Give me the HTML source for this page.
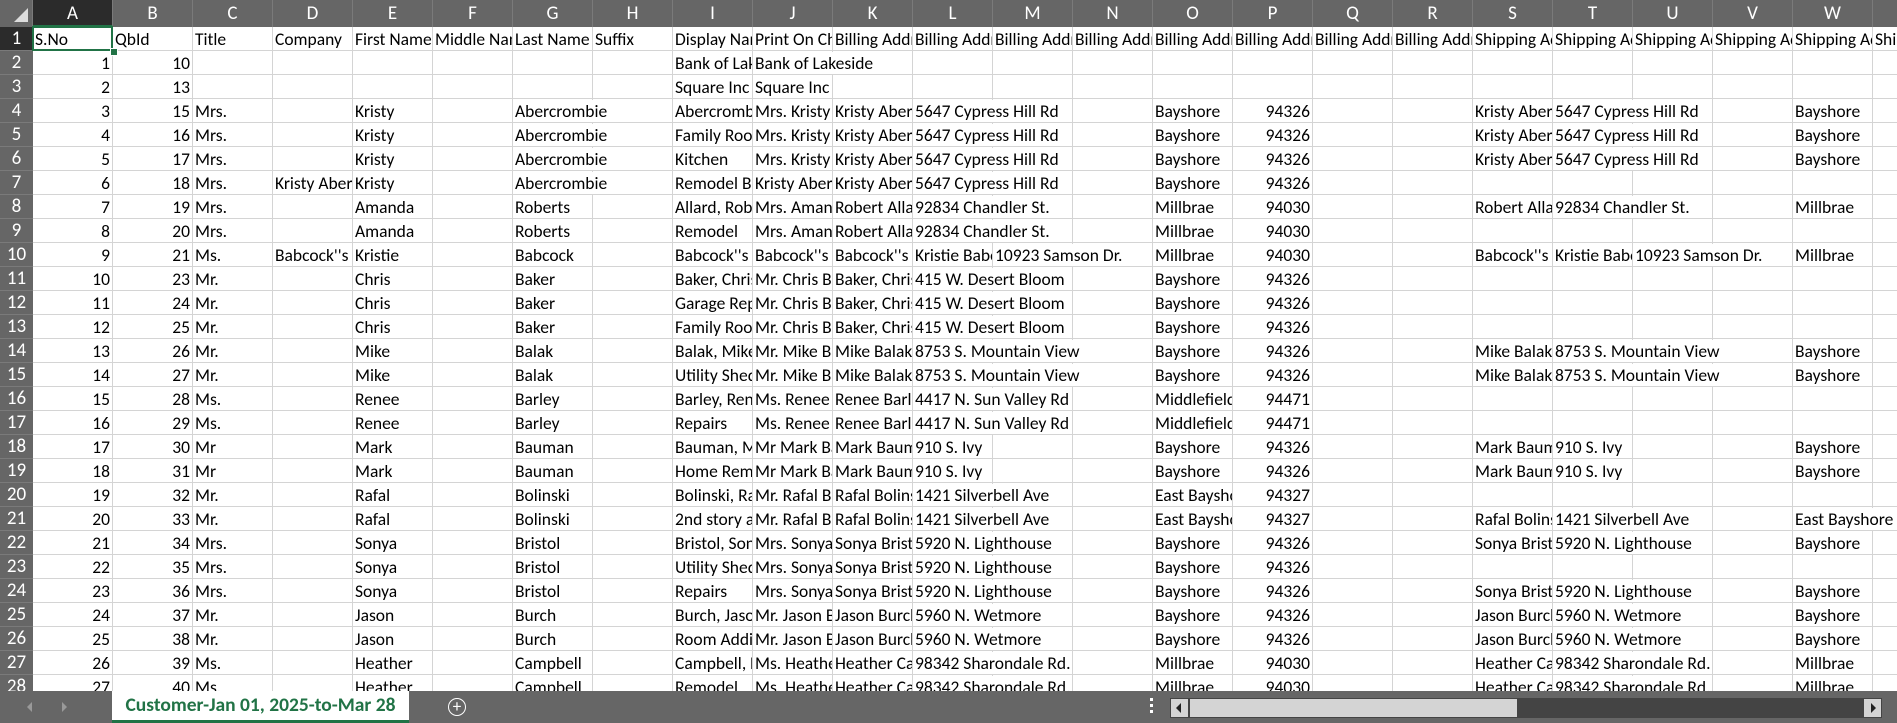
<!DOCTYPE html>
<html><head><meta charset="utf-8"><style>
body{margin:0;width:1897px;height:723px;overflow:hidden;background:#fff;font-family:Calibri,Carlito,"Liberation Sans",sans-serif;position:relative}
#g{position:absolute;left:0;top:0;width:1897px;height:691px;overflow:hidden}
.ch{position:absolute;top:0;height:27px;background:#666;color:#fff;font-size:19px;text-align:center;line-height:28px;border-right:1px solid #7a7a7a;box-sizing:border-box}
.rh{position:absolute;left:0;width:33px;height:24px;background:#666;color:#fff;font-size:19px;text-align:center;line-height:24px;border-bottom:1px solid #7a7a7a;box-sizing:border-box}
.vl{position:absolute;top:27px;width:1px;height:664px;background:#d4d4d4}
.hl{position:absolute;left:33px;height:1px;width:1864px;background:#d4d4d4}
.t{position:absolute;height:24px;line-height:25px;font-size:17.5px;white-space:nowrap;overflow:hidden;padding:0 2px;box-sizing:border-box;background:#fff;color:#000}
#tb{position:absolute;left:0;top:691px;width:1897px;height:32px;background:#666}
</style></head><body>
<div id="g"></div>
<div id="tb">
<div style="position:absolute;left:27px;top:11px;width:0;height:0;border-top:5px solid transparent;border-bottom:5px solid transparent;border-right:5px solid #999"></div>
<div style="position:absolute;left:62px;top:11px;width:0;height:0;border-top:5px solid transparent;border-bottom:5px solid transparent;border-left:5px solid #999"></div>
<div style="position:absolute;left:112px;top:0;width:297px;height:29px;background:#fff;border-bottom:3px solid #217346;color:#217346;font-weight:bold;font-size:19.5px;line-height:28px;text-align:center">Customer-Jan 01, 2025-to-Mar 28</div>
<div style="position:absolute;left:448px;top:7px;width:16px;height:16px;border:1.5px solid #fff;border-radius:50%;color:#fff;font-size:17px;line-height:16px;text-align:center">+</div>
<div style="position:absolute;left:1150px;top:7px;width:3px;height:3px;background:#fff;box-shadow:0 6px #fff,0 12px #fff"></div>
<div style="position:absolute;left:1170px;top:7px;width:712px;height:20px;background:#444"></div>
<div style="position:absolute;left:1171px;top:8px;width:17px;height:18px;background:#d4d4d4"></div>
<div style="position:absolute;left:1176px;top:12px;border-top:5px solid transparent;border-bottom:5px solid transparent;border-right:5px solid #222"></div>
<div style="position:absolute;left:1190px;top:8px;width:327px;height:18px;background:#d4d4d4"></div>
<div style="position:absolute;left:1864px;top:8px;width:17px;height:18px;background:#d4d4d4"></div>
<div style="position:absolute;left:1871px;top:12px;border-top:5px solid transparent;border-bottom:5px solid transparent;border-left:5px solid #222"></div>
</div>
<script>
var L="ABCDEFGHIJKLMNOPQRSTUVWX".split("");
var X0=33,W=80,H0=27,RH=24;
var KA="Kristy Abercrombie",CH="5647 Cypress Hill Rd";
function r(a,b,c,d,e,g,i,j,k,l,m,o,p,s,t,u,w){return [a,b,c,d,e,"",g,"",i,j,k,l,m,"",o,p,"","",s,t,u,"",w,""];}
var rows=[
["S.No","QbId","Title","Company","First Name","Middle Name","Last Name","Suffix","Display Name","Print On Check Name","Billing Address1","Billing Address2","Billing Address3","Billing Address4","Billing Address City","Billing Address Zip","Billing Address State","Billing Address Country","Shipping Address1","Shipping Address2","Shipping Address3","Shipping Address4","Shipping Address City","Shipping"],
r(1,10,"","","","","Bank of Lakeside","Bank of Lakeside","","","","","","","","",""),
r(2,13,"","","","","Square Inc","Square Inc","","","","","","","","",""),
r(3,15,"Mrs.","","Kristy","Abercrombie","Abercrombie, Kristy","Mrs. Kristy Abercrombie",KA,CH,"","Bayshore",94326,KA,CH,"","Bayshore"),
r(4,16,"Mrs.","","Kristy","Abercrombie","Family Room","Mrs. Kristy Abercrombie",KA,CH,"","Bayshore",94326,KA,CH,"","Bayshore"),
r(5,17,"Mrs.","","Kristy","Abercrombie","Kitchen","Mrs. Kristy Abercrombie",KA,CH,"","Bayshore",94326,KA,CH,"","Bayshore"),
r(6,18,"Mrs.",KA,"Kristy","Abercrombie","Remodel Bathroom",KA,KA,CH,"","Bayshore",94326,"","","",""),
r(7,19,"Mrs.","","Amanda","Roberts","Allard, Robert","Mrs. Amanda Roberts","Robert Allard","92834 Chandler St.","","Millbrae",94030,"Robert Allard","92834 Chandler St.","","Millbrae"),
r(8,20,"Mrs.","","Amanda","Roberts","Remodel","Mrs. Amanda Roberts","Robert Allard","92834 Chandler St.","","Millbrae",94030,"","","",""),
r(9,21,"Ms.","Babcock''s Music Shop","Kristie","Babcock","Babcock''s Music Shop","Babcock''s Music Shop","Babcock''s Music Shop","Kristie Babcock","10923 Samson Dr.","Millbrae",94030,"Babcock''s Music Shop","Kristie Babcock","10923 Samson Dr.","Millbrae"),
r(10,23,"Mr.","","Chris","Baker","Baker, Chris","Mr. Chris Baker","Baker, Chris","415 W. Desert Bloom","","Bayshore",94326,"","","",""),
r(11,24,"Mr.","","Chris","Baker","Garage Repair","Mr. Chris Baker","Baker, Chris","415 W. Desert Bloom","","Bayshore",94326,"","","",""),
r(12,25,"Mr.","","Chris","Baker","Family Room","Mr. Chris Baker","Baker, Chris","415 W. Desert Bloom","","Bayshore",94326,"","","",""),
r(13,26,"Mr.","","Mike","Balak","Balak, Mike","Mr. Mike Balak","Mike Balak","8753 S. Mountain View","","Bayshore",94326,"Mike Balak","8753 S. Mountain View","","Bayshore"),
r(14,27,"Mr.","","Mike","Balak","Utility Shed","Mr. Mike Balak","Mike Balak","8753 S. Mountain View","","Bayshore",94326,"Mike Balak","8753 S. Mountain View","","Bayshore"),
r(15,28,"Ms.","","Renee","Barley","Barley, Renee","Ms. Renee Barley","Renee Barley","4417 N. Sun Valley Rd","","Middlefield",94471,"","","",""),
r(16,29,"Ms.","","Renee","Barley","Repairs","Ms. Renee Barley","Renee Barley","4417 N. Sun Valley Rd","","Middlefield",94471,"","","",""),
r(17,30,"Mr","","Mark","Bauman","Bauman, Mark","Mr Mark Bauman","Mark Bauman","910 S. Ivy","","Bayshore",94326,"Mark Bauman","910 S. Ivy","","Bayshore"),
r(18,31,"Mr","","Mark","Bauman","Home Remodel","Mr Mark Bauman","Mark Bauman","910 S. Ivy","","Bayshore",94326,"Mark Bauman","910 S. Ivy","","Bayshore"),
r(19,32,"Mr.","","Rafal","Bolinski","Bolinski, Rafal","Mr. Rafal Bolinski","Rafal Bolinski","1421 Silverbell Ave","","East Bayshore",94327,"","","",""),
r(20,33,"Mr.","","Rafal","Bolinski","2nd story addition","Mr. Rafal Bolinski","Rafal Bolinski","1421 Silverbell Ave","","East Bayshore",94327,"Rafal Bolinski","1421 Silverbell Ave","","East Bayshore"),
r(21,34,"Mrs.","","Sonya","Bristol","Bristol, Sonya","Mrs. Sonya Bristol","Sonya Bristol","5920 N. Lighthouse","","Bayshore",94326,"Sonya Bristol","5920 N. Lighthouse","","Bayshore"),
r(22,35,"Mrs.","","Sonya","Bristol","Utility Shed","Mrs. Sonya Bristol","Sonya Bristol","5920 N. Lighthouse","","Bayshore",94326,"","","",""),
r(23,36,"Mrs.","","Sonya","Bristol","Repairs","Mrs. Sonya Bristol","Sonya Bristol","5920 N. Lighthouse","","Bayshore",94326,"Sonya Bristol","5920 N. Lighthouse","","Bayshore"),
r(24,37,"Mr.","","Jason","Burch","Burch, Jason","Mr. Jason Burch","Jason Burch","5960 N. Wetmore","","Bayshore",94326,"Jason Burch","5960 N. Wetmore","","Bayshore"),
r(25,38,"Mr.","","Jason","Burch","Room Addition","Mr. Jason Burch","Jason Burch","5960 N. Wetmore","","Bayshore",94326,"Jason Burch","5960 N. Wetmore","","Bayshore"),
r(26,39,"Ms.","","Heather","Campbell","Campbell, Heather","Ms. Heather Campbell","Heather Campbell","98342 Sharondale Rd.","","Millbrae",94030,"Heather Campbell","98342 Sharondale Rd.","","Millbrae"),
r(27,40,"Ms.","","Heather","Campbell","Remodel","Ms. Heather Campbell","Heather Campbell","98342 Sharondale Rd.","","Millbrae",94030,"Heather Campbell","98342 Sharondale Rd.","","Millbrae")
];
var g=document.getElementById("g"),h="";
for(var c=0;c<24;c++){var x=X0+c*W;h+='<div class="vl" style="left:'+(x+W-1)+'px"></div>';}
for(var i=1;i<=28;i++){h+='<div class="hl" style="top:'+(H0+i*RH-1)+'px"></div>';}
rows.forEach(function(row,ri){
  var y=H0+ri*RH;
  for(var c=0;c<24;c++){var v=row[c];if(v===""||v===undefined)continue;
    var x=X0+c*W,isNum=typeof v=="number";
    if(isNum){h+='<div class="t" style="left:'+x+'px;top:'+y+'px;width:'+(W-1)+'px;height:23px;text-align:right">'+v+'</div>';continue;}
    var n=c+1;while(n<24&&(row[n]===""||row[n]===undefined))n++;
    var w=(n-c)*W-1;
    h+='<div class="t" style="left:'+x+'px;top:'+y+'px;width:'+w+'px;height:23px;background:transparent"><span style="background:#fff">'+v+'</span></div>';
  }
});
h+='<div style="position:absolute;left:0;top:0;width:33px;height:27px;background:#666;border-right:1px solid #7a7a7a;box-sizing:border-box"></div>';
h+='<div style="position:absolute;left:14px;top:8px;width:0;height:0;border-left:14px solid transparent;border-bottom:14px solid #ddd"></div>';
for(var c=0;c<24;c++){var x=X0+c*W;h+='<div class="ch" style="left:'+x+'px;width:'+W+'px;'+(c==0?'background:#2b2b2b;border-bottom:2px solid #217346;':'')+'">'+L[c]+'</div>';}
for(var i=1;i<=28;i++){h+='<div class="rh" style="top:'+(H0+(i-1)*RH)+'px;'+(i==1?'background:#2b2b2b;':'')+'">'+i+'</div>';}
h+='<div style="position:absolute;left:'+(X0-1)+'px;top:'+(H0-1)+'px;width:'+(W+1)+'px;height:'+(RH+1)+'px;border:2px solid #217346;box-sizing:border-box"></div>';
h+='<div style="position:absolute;left:'+(X0+W-3)+'px;top:'+(H0+RH-3)+'px;width:6px;height:6px;background:#217346;border:1px solid #fff"></div>';
g.innerHTML=h;
</script>
</body></html>
